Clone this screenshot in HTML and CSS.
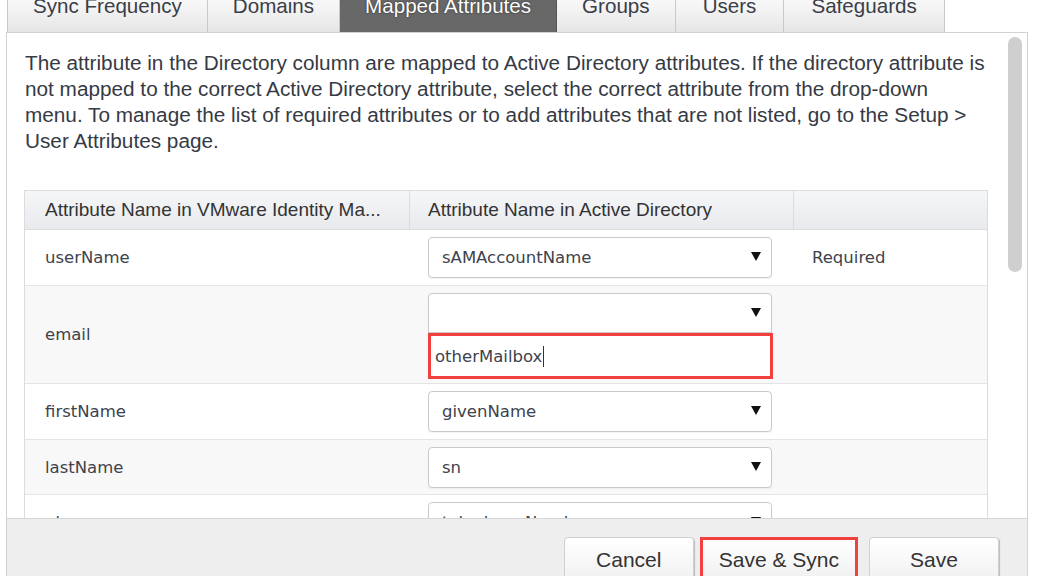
FILE: index.html
```html
<!DOCTYPE html>
<html lang="en">
<head>
<meta charset="utf-8">
<title>Mapped Attributes</title>
<link rel="stylesheet" href="styles.css">
</head>
<body>
<div class="tabs">
  <div class="tab"><span class="tab-label">Sync Frequency</span></div>
  <div class="tab"><span class="tab-label">Domains</span></div>
  <div class="tab active"><span class="tab-label">Mapped Attributes</span></div>
  <div class="tab"><span class="tab-label">Groups</span></div>
  <div class="tab tab-wide"><span class="tab-label">Users</span></div>
  <div class="tab tab-wide"><span class="tab-label">Safeguards</span></div>
</div>
<div class="panel">
  <div class="panel-body">
    <p class="intro">The attribute in the Directory column are mapped to Active Directory attributes. If the directory attribute is<br>not mapped to the correct Active Directory attribute, select the correct attribute from the drop-down<br>menu. To manage the list of required attributes or to add attributes that are not listed, go to the Setup &gt;<br>User Attributes page.</p>
    <div class="attr-table">
      <div class="row head">
        <div class="cell first">Attribute Name in VMware Identity Ma...</div>
        <div class="cell">Attribute Name in Active Directory</div>
        <div class="cell"></div>
      </div>
      <div class="row">
        <div class="cell first">userName</div>
        <div class="cell"><div class="select"><span>sAMAccountName</span><svg class="arrow" width="10" height="9" viewBox="0 0 10 9"><polygon points="0,0 10,0 5,9" fill="#111"/></svg></div></div>
        <div class="cell">Required</div>
      </div>
      <div class="row alt tall">
        <div class="cell first">email</div>
        <div class="cell top">
          <div class="combo">
            <div class="select joined"><span></span><svg class="arrow" width="10" height="9" viewBox="0 0 10 9"><polygon points="0,0 10,0 5,9" fill="#111"/></svg></div>
            <div class="typed"><span>otherMailbox</span><span class="caret"></span></div>
          </div>
        </div>
        <div class="cell"></div>
      </div>
      <div class="row">
        <div class="cell first">firstName</div>
        <div class="cell"><div class="select"><span>givenName</span><svg class="arrow" width="10" height="9" viewBox="0 0 10 9"><polygon points="0,0 10,0 5,9" fill="#111"/></svg></div></div>
        <div class="cell"></div>
      </div>
      <div class="row alt short">
        <div class="cell first">lastName</div>
        <div class="cell"><div class="select"><span>sn</span><svg class="arrow" width="10" height="9" viewBox="0 0 10 9"><polygon points="0,0 10,0 5,9" fill="#111"/></svg></div></div>
        <div class="cell"></div>
      </div>
      <div class="row">
        <div class="cell first">phone</div>
        <div class="cell"><div class="select"><span>telephoneNumber</span><svg class="arrow" width="10" height="9" viewBox="0 0 10 9"><polygon points="0,0 10,0 5,9" fill="#111"/></svg></div></div>
        <div class="cell"></div>
      </div>
    </div>
    <div class="scroll-thumb"></div>
  </div>
  <div class="footer">
    <button class="btn btn-cancel">Cancel</button>
    <button class="btn btn-sync">Save &amp; Sync</button>
    <button class="btn">Save</button>
  </div>
</div>
</body>
</html>
```

FILE: styles.css
```css
body {
  margin: 0;
  width: 1038px;
  height: 576px;
  overflow: hidden;
  background: #fff;
  font-family: "Liberation Sans", Arial, sans-serif;
  color: #333;
}

.tabs {
  display: flex;
  margin-left: 7px;
  height: 32px;
}

.tab {
  height: 32px;
  box-sizing: border-box;
  padding: 0 25px;
  font-size: 20.6px;
  line-height: 20px;
  color: #3a3e48;
  background: linear-gradient(#f8f8f8, #e6e6e6);
  border-right: 1px solid #cacaca;
}

.tab:first-child {
  border-left: 1px solid #cacaca;
}

.tab.tab-wide {
  padding: 0 27px;
}

.tab-label {
  display: block;
  margin-top: -4px;
  white-space: nowrap;
}

.tab.active {
  background: #686868;
  color: #fff;
  text-shadow: 0 0 2px #222;
  border-right-color: #555;
}

.panel {
  margin-left: 6px;
  width: 1022px;
  height: 560px;
  box-sizing: border-box;
  border: 1px solid #d2d2d2;
  display: flex;
  flex-direction: column;
}

.panel-body {
  flex: none;
  height: 485px;
  overflow: hidden;
  position: relative;
  padding: 0 17px;
}

.intro {
  margin: 17px 0 0 1px;
  font-size: 20.75px;
  line-height: 26px;
  white-space: nowrap;
  color: #363a44;
}

.attr-table {
  margin-top: 36px;
  width: 964px;
  box-sizing: border-box;
  border: 1px solid #dcdcdc;
}

.row {
  display: grid;
  grid-template-columns: 385px 384px 1fr;
  height: 56px;
  box-sizing: border-box;
  border-bottom: 1px solid #e4e4e4;
  background: #fff;
  font-family: "DejaVu Sans", Verdana, sans-serif;
  font-size: 16.5px;
  color: #3e424c;
}

.row.alt {
  background: #f8f8f8;
}

.row.tall {
  height: 98px;
}

.row.short {
  height: 55px;
}

.row.head {
  height: 39px;
  background: linear-gradient(#f5f6f8, #e8eaed);
  border-bottom-color: #dcdcdc;
  font-family: "Liberation Sans", Arial, sans-serif;
  font-size: 19px;
  color: #333;
}

.head .cell {
  border-right: 1px solid #dcdcdc;
}

.head .cell:last-child {
  border-right: 0;
}

.cell {
  display: flex;
  align-items: center;
  padding-left: 18px;
  box-sizing: border-box;
  min-width: 0;
  white-space: nowrap;
}

.cell.first {
  padding-left: 20px;
}

.cell.top {
  align-items: flex-start;
  padding-top: 7px;
}

.select {
  width: 344px;
  height: 41px;
  box-sizing: border-box;
  border: 1px solid #c9c9c9;
  border-radius: 4px;
  background: #fff;
  display: flex;
  align-items: center;
  justify-content: space-between;
  padding: 0 10px 0 13px;
  box-shadow: 0 1px 1px rgba(0, 0, 0, 0.05);
}

.select .arrow {
  margin-top: -2px;
}

.combo {
  display: flex;
  flex-direction: column;
}

.select.joined {
  height: 40px;
  border-radius: 4px 4px 0 0;
  box-shadow: none;
}

.typed {
  width: 345px;
  height: 46px;
  box-sizing: border-box;
  border: 3px solid #f2403f;
  background: #fff;
  padding-left: 4px;
  display: flex;
  align-items: center;
}

.caret {
  width: 1px;
  height: 21px;
  background: #333;
  margin-left: 1px;
}

.scroll-thumb {
  position: absolute;
  top: 4px;
  right: 5px;
  width: 14px;
  height: 235px;
  border-radius: 7px;
  background: #cfcfcf;
}

.footer {
  flex: 1;
  border-top: 1px solid #d6d6d6;
  background: #eeeeee;
  display: flex;
  justify-content: flex-end;
  align-items: flex-start;
  padding: 18px 28px 0 0;
}

.btn {
  height: 46px;
  min-width: 130px;
  box-sizing: border-box;
  padding: 0 16px;
  font-family: "Liberation Sans", Arial, sans-serif;
  font-size: 21px;
  color: #333;
  background: linear-gradient(#ffffff, #f0f0f0);
  border: 1px solid #d0d0d0;
  border-radius: 4px;
  box-shadow: 1px 1px 1px rgba(0, 0, 0, 0.22);
}

.btn-cancel {
  margin-right: 6px;
}

.btn-sync {
  border: 3px solid #f2403f;
  border-radius: 0;
  box-shadow: none;
  margin-right: 11px;
}
```
